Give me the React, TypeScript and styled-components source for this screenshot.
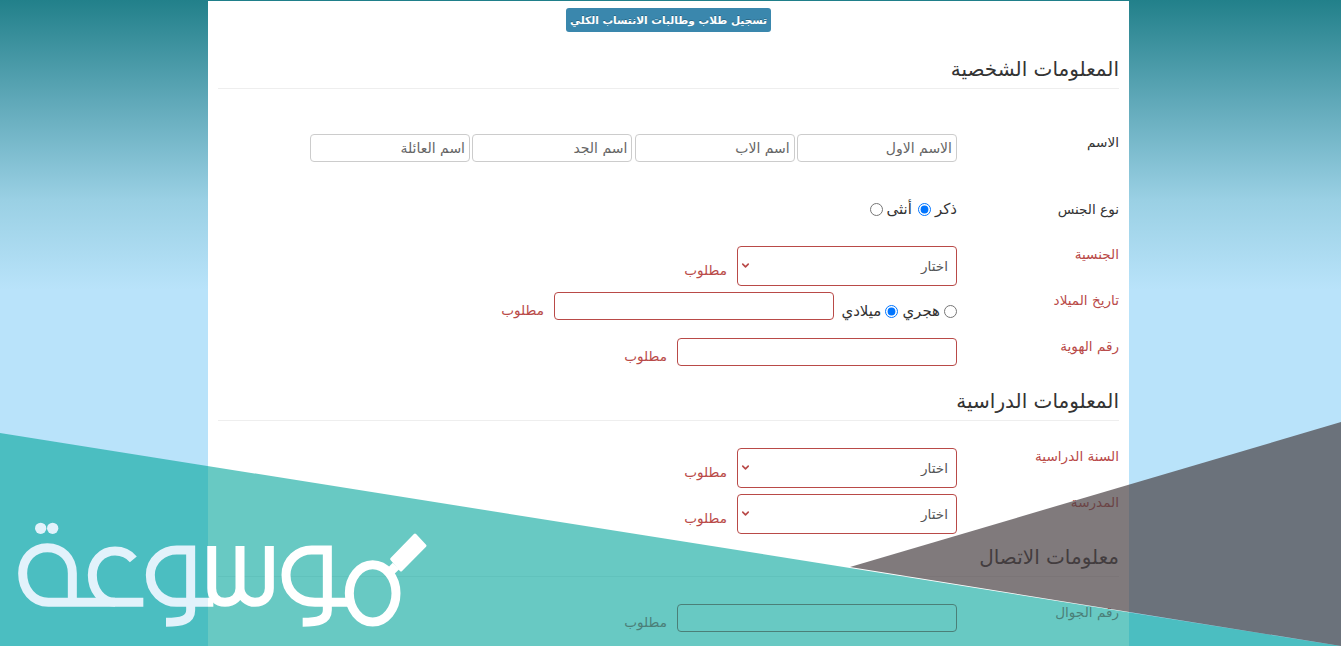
import React from 'react';
import styled, { createGlobalStyle } from 'styled-components';
import { ChevronDown } from 'lucide-react';

const RED = '#b94a48';

const App = () => {
  return (
    <Page>
      <GlobalStyle />
      <Panel dir="rtl">
        <BadgeRow>
          <Badge>تسجيل طلاب وطالبات الانتساب الكلي</Badge>
        </BadgeRow>

        <SectionTitle $top={21}>المعلومات الشخصية</SectionTitle>

        <Row $top={45}>
          <Label>الاسم</Label>
          <Controls $gap={2.33}>
            <TextInput $width={160} placeholder="الاسم الاول" />
            <TextInput $width={160} placeholder="اسم الاب" />
            <TextInput $width={160} placeholder="اسم الجد" />
            <TextInput $width={160} placeholder="اسم العائلة" />
          </Controls>
        </Row>

        <Row $top={39}>
          <Label>نوع الجنس</Label>
          <Controls $gap={6}>
            <RadioLabel>
              ذكر
              <Radio name="gender" defaultChecked />
            </RadioLabel>
            <RadioLabel>
              أنثى
              <Radio name="gender" />
            </RadioLabel>
          </Controls>
        </Row>

        <Row $top={29}>
          <Label $error>الجنسية</Label>
          <Controls $gap={10}>
            <SelectField />
            <Required $raised>مطلوب</Required>
          </Controls>
        </Row>

        <Row $top={6}>
          <Label $error>تاريخ الميلاد</Label>
          <Controls $gap={10}>
            <RadioGroup>
              <RadioLabel>
                <Radio name="calendar" />
                هجري
              </RadioLabel>
              <RadioLabel>
                <Radio name="calendar" defaultChecked />
                ميلادي
              </RadioLabel>
            </RadioGroup>
            <TextInput $width={280} $error />
            <Required>مطلوب</Required>
          </Controls>
        </Row>

        <Row $top={18}>
          <Label $error>رقم الهوية</Label>
          <Controls $gap={10}>
            <TextInput $width={280} $error />
            <Required>مطلوب</Required>
          </Controls>
        </Row>

        <SectionTitle $top={19}>المعلومات الدراسية</SectionTitle>

        <Row $top={27}>
          <Label $error>السنة الدراسية</Label>
          <Controls $gap={10}>
            <SelectField />
            <Required $raised>مطلوب</Required>
          </Controls>
        </Row>

        <Row $top={6}>
          <Label $error>المدرسة</Label>
          <Controls $gap={10}>
            <SelectField />
            <Required $raised>مطلوب</Required>
          </Controls>
        </Row>

        <SectionTitle $top={7}>معلومات الاتصال</SectionTitle>

        <Row $top={27}>
          <Label $error>رقم الجوال</Label>
          <Controls $gap={10}>
            <TextInput $width={280} $error />
            <Required>مطلوب</Required>
          </Controls>
        </Row>
      </Panel>

      <TealBand />
      <GreyBand />
      <Logo />
    </Page>
  );
};

export default App;

const SelectField = () => (
  <SelectBox>
    <Select defaultValue="">
      <option value="">اختار</option>
    </Select>
    <SelectArrow>
      <ChevronDown size={11} strokeWidth={3.5} color={RED} />
    </SelectArrow>
  </SelectBox>
);

const Logo = () => (
  <LogoSvg viewBox="0 0 1350 678" aria-hidden="true">
    <defs>
      <linearGradient id="logoInk" gradientUnits="userSpaceOnUse" x1="0" y1="0" x2="1350" y2="0">
        <stop offset="0.4622" stopColor="#e2f2fb" />
        <stop offset="0.4622" stopColor="#ffffff" />
      </linearGradient>
    </defs>
    <g fill="none" stroke="url(#logoInk)" strokeWidth="27">
      {/* ta marbuta, its foot runs on under the ain */}
      <path d="M 430 547 H 145 C 100 547 68 510 68 460 C 68 415 100 383 142 383 C 185 383 217 415 217 460 V 547" />
      {/* ain */}
      <path d="M 400 418 C 385 400 365 393 345 393 C 305 393 277 425 277 465 C 277 510 305 547 345 547" />
      {/* first waw */}
      <path d="M 640 547 H 530 C 490 547 451 515 451 465 C 451 420 490 390 530 390 H 572 V 570 C 572 600 545 607 498 607" />
      {/* seen */}
      <path d="M 635 378 V 505 C 635 530 650 547 675 547 C 700 547 720 530 720 505 V 378 M 720 505 C 720 530 745 547 765 547 C 790 547 808 530 808 505 V 378" />
      {/* second waw */}
      <path d="M 1045 547 H 945 C 895 547 858 515 858 465 C 858 420 895 390 935 390 H 982 V 570 C 982 600 955 607 908 607" />
      {/* magnifier ring and neck */}
      <ellipse cx="1118" cy="520" rx="70" ry="86" />
      <path d="M 1168 458 L 1188 438" />
    </g>
    {/* magnifier handle */}
    <path
      d="M 1245 345 L 1275 377 L 1203 450 L 1175 417 Z"
      fill="#fff"
      stroke="#fff"
      strokeWidth="9"
      strokeLinejoin="round"
    />
    <g fill="#e2f2fb">
      <circle cx="122" cy="325" r="17" />
      <circle cx="158" cy="325" r="17" />
    </g>
  </LogoSvg>
);

const GlobalStyle = createGlobalStyle`
  html, body {
    margin: 0;
    padding: 0;
  }
  body {
    font-family: "DejaVu Sans", "Noto Sans", sans-serif;
    font-size: 13.6px;
    color: #333;
  }
`;

const Page = styled.div`
  position: relative;
  width: 1341px;
  height: 646px;
  overflow: hidden;
  padding-left: 208px;
  box-sizing: border-box;
  background: linear-gradient(
    180deg,
    #22808a 0,
    #5fa8b8 100px,
    #9ad0e4 200px,
    #b9e3fa 290px
  );
`;

const Panel = styled.main`
  width: 921px;
  height: 646px;
  box-sizing: border-box;
  padding: 0 10px;
  background: #fff;
  border-top: 1px solid #1f7f8a;
`;

const BadgeRow = styled.div`
  display: flex;
  justify-content: center;
  padding-top: 7px;
`;

const Badge = styled.span`
  height: 24px;
  width: 205px;
  display: flex;
  align-items: center;
  justify-content: center;
  white-space: nowrap;
  border-radius: 3px;
  background: #3a87ad;
  color: #fff;
  font-size: 10.6px;
  font-weight: 700;
  text-shadow: 0 -1px 0 rgba(0, 0, 0, 0.25);
`;

const SectionTitle = styled.h2<{ $top: number }>`
  margin: ${p => p.$top}px 0 0;
  height: 35px;
  line-height: 32px;
  font-size: 20px;
  font-weight: 400;
  color: #333;
  border-bottom: 1px solid #eee;
`;

const Row = styled.div<{ $top: number }>`
  display: grid;
  grid-template-columns: 162px 1fr;
  margin-top: ${p => p.$top}px;
`;

const Label = styled.label<{ $error?: boolean }>`
  line-height: 16px;
  color: ${p => (p.$error ? RED : '#333')};
`;

const Controls = styled.div<{ $gap: number }>`
  display: flex;
  gap: ${p => p.$gap}px;
  align-items: flex-start;
`;

const TextInput = styled.input<{ $width: number; $error?: boolean }>`
  width: ${p => p.$width}px;
  height: 28px;
  box-sizing: border-box;
  padding: 0 4px;
  border: 1px solid ${p => (p.$error ? RED : '#ccc')};
  border-radius: 4px;
  background: transparent;
  font: inherit;
  font-size: 14px;
  color: #555;
  &::placeholder {
    color: #666;
    opacity: 1;
  }
`;

const SelectBox = styled.div`
  position: relative;
  width: 220px;
  height: 40px;
`;

const Select = styled.select`
  width: 100%;
  height: 100%;
  box-sizing: border-box;
  padding: 0 8px;
  appearance: none;
  border: 1px solid ${RED};
  border-radius: 4px;
  background: transparent;
  font: inherit;
  color: #555;
`;

const SelectArrow = styled.span`
  position: absolute;
  left: 3px;
  top: 14px;
  display: flex;
`;

const Required = styled.span<{ $raised?: boolean }>`
  align-self: flex-end;
  line-height: 20px;
  margin-bottom: ${p => (p.$raised ? 6 : 0)}px;
  color: ${RED};
`;

const RadioGroup = styled.div`
  display: flex;
  gap: 4px;
  width: 113px;
  padding-top: 11px;
`;

const RadioLabel = styled.label`
  display: flex;
  align-items: center;
  gap: 4px;
  height: 16px;
  white-space: nowrap;
  font-size: 15px;
  color: #333;
`;

const Radio = styled.input.attrs({ type: 'radio' })`
  margin: 0;
  width: 13px;
  height: 13px;
`;

const TealBand = styled.div`
  position: absolute;
  inset: 0;
  background: rgba(0, 164, 154, 0.592);
  clip-path: polygon(0 433px, 1341px 646px, 0 646px);
  pointer-events: none;
`;

const GreyBand = styled.div`
  position: absolute;
  inset: 0;
  background: rgba(74, 65, 68, 0.7);
  clip-path: polygon(850px 567px, 1341px 422px, 1341px 646px);
  pointer-events: none;
`;

const LogoSvg = styled.svg`
  position: absolute;
  left: 0;
  top: 420px;
  width: 450px;
  height: 226px;
  pointer-events: none;
`;
